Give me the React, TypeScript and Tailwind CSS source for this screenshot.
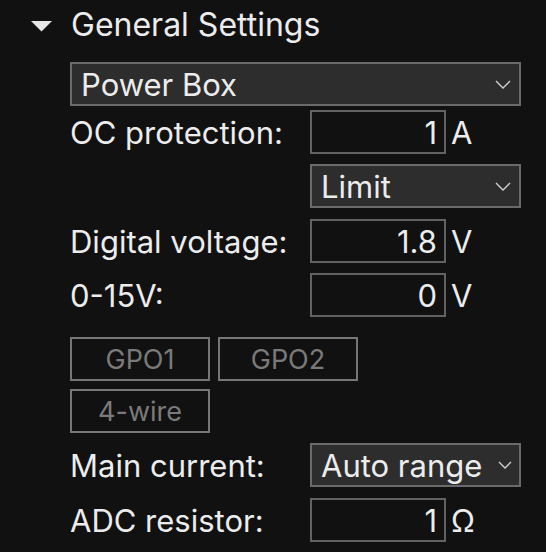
import { ReactNode } from "react";

const FONT = { fontFamily: "Inter, 'Noto Sans', sans-serif" };

function Chevron({ small }: { small?: boolean }) {
  return small ? (
    <svg width="14" height="8" viewBox="0 0 14 8" className="shrink-0">
      <polyline points="1,1 7,7 13,1" fill="none" stroke="#cfcfcf" strokeWidth="1.4" />
    </svg>
  ) : (
    <svg width="16" height="9" viewBox="0 0 16 9" className="shrink-0">
      <polyline points="1,1 8,8 15,1" fill="none" stroke="#cfcfcf" strokeWidth="1.4" />
    </svg>
  );
}

function Select({ value, wide, small, className = "" }: { value: string; wide?: boolean; small?: boolean; className?: string }) {
  return (
    <div
      className={`h-[44px] ${wide ? "w-[451px]" : "w-[211px]"} flex items-center justify-between bg-[#2d2d2d] border-2 border-[#6a6a6a] pl-[9px] ${small ? "pr-[7px]" : "pr-[8px]"} text-[31px] leading-none text-[#ececec] ${className}`}
    >
      <span>{value}</span>
      <Chevron small={small} />
    </div>
  );
}

function Field({ label, value, unit, className = "" }: { label: string; value: string; unit: string; className?: string }) {
  return (
    <div className={`flex items-center ${className}`}>
      <span className="w-[240px] text-[31px] leading-none text-[#ececec]">{label}</span>
      <div className="h-[44px] w-[136px] flex items-center justify-end border-2 border-[#626262] pr-[7px] text-[31px] leading-none text-[#ececec]">
        {value}
      </div>
      <span className="ml-[5px] text-[31px] leading-none text-[#ececec]">{unit}</span>
    </div>
  );
}

function Toggle({ children }: { children: ReactNode }) {
  return (
    <div className="h-[44px] w-[140px] flex items-center justify-center border-2 border-[#767676] text-[27px] leading-none text-[#7a7a7a]">
      {children}
    </div>
  );
}

export default function App() {
  return (
    <div className="w-[546px] h-[552px] bg-[#111111] overflow-hidden" style={FONT}>
      <div className="h-[49px] flex items-center">
        <svg width="21" height="11" viewBox="0 0 21 11" className="ml-[31px] mt-[4px]">
          <polygon points="0,0 21,0 10.5,10.5" fill="#e6e6e6" />
        </svg>
        <span className="ml-[19px] text-[32px] leading-none text-[#ececec]">General Settings</span>
      </div>

      <div className="pl-[70px] flex flex-col">
        <Select value="Power Box" wide className="mt-[13px]" />
        <Field label="OC protection:" value="1" unit="A" className="mt-[4px]" />
        <Select value="Limit" className="mt-[10px] ml-[240px]" />
        <Field label="Digital voltage:" value="1.8" unit="V" className="mt-[11px]" />
        <Field label="0-15V:" value="0" unit="V" className="mt-[10px]" />
        <div className="mt-[20px] flex gap-[8px]">
          <Toggle>GPO1</Toggle>
          <Toggle>GPO2</Toggle>
        </div>
        <div className="mt-[8px] flex">
          <Toggle>4-wire</Toggle>
        </div>
        <div className="mt-[10px] flex items-center">
          <span className="w-[240px] text-[31px] leading-none text-[#ececec]">Main current:</span>
          <Select value="Auto range" small />
        </div>
        <Field label="ADC resistor:" value="1" unit="Ω" className="mt-[11px]" />
      </div>
    </div>
  );
}
